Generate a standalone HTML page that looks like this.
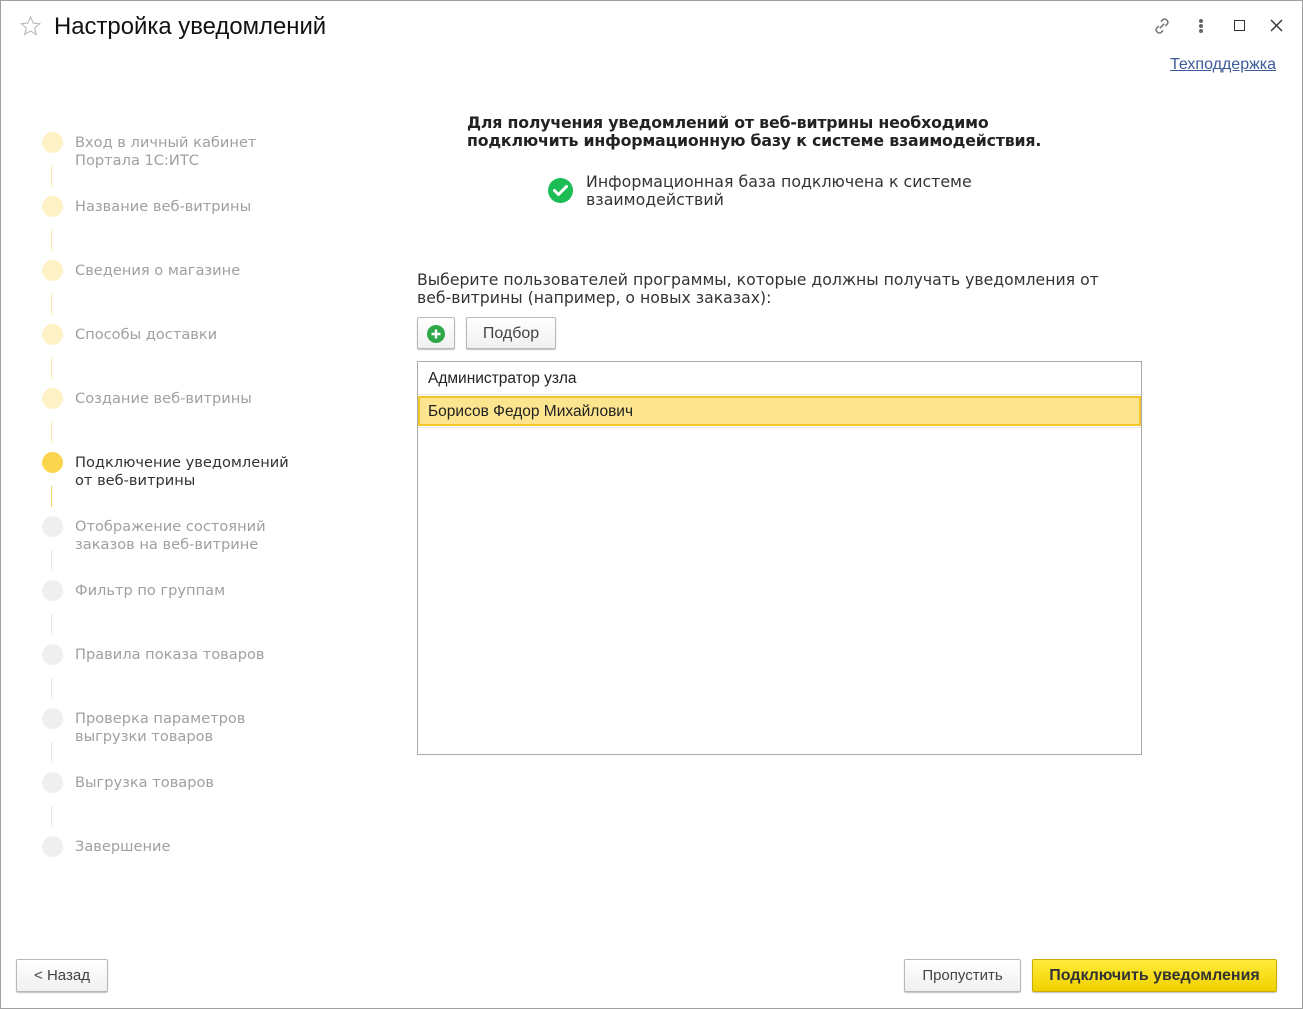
<!DOCTYPE html>
<html><head><meta charset="utf-8"><style>
*{margin:0;padding:0;box-sizing:border-box}
body{width:1303px;height:1009px;background:#fff;position:relative;overflow:hidden;font-family:"Liberation Sans",Arial,sans-serif}
.frame{position:absolute;left:0;top:0;width:1303px;height:1009px;border:1px solid #a0a0a0}
.a{position:absolute}
.st{position:absolute;left:75px;font-family:"DejaVu Sans",sans-serif;font-size:14.6px;line-height:18px;color:#a0a0a0;white-space:nowrap}
.c{position:absolute;left:42px;width:21px;height:21px;border-radius:50%}
.ln{position:absolute;left:51px;width:1px;height:21px}
.btn{position:absolute;border:1px solid #b8b8b8;border-radius:2px;background:linear-gradient(#fff,#f0f0f0);box-shadow:0 1px 1px rgba(0,0,0,.25);font-size:15px;color:#444;text-align:center}
</style></head><body>
<div class="frame"></div>
<svg class="a" style="left:19px;top:15px" width="23" height="22" viewBox="0 0 24 24"><path d="M12 2l2.9 6.9 7.1.6-5.4 4.7 1.7 7.1L12 17.5 5.7 21.3l1.7-7.1L2 9.5l7.1-.6z" fill="none" stroke="#b8b8b8" stroke-width="1.2"/></svg>
<div class="a" style="left:54px;top:13px;font-size:23.9px;color:#111">Настройка уведомлений</div>
<svg class="a" style="left:1151px;top:15px" width="22" height="22" viewBox="0 0 20 20" fill="none" stroke="#777" stroke-width="1.4"><path d="M8 12l4-4"/><path d="M9 6l2-2a3 3 0 014 4l-2 2"/><path d="M11 14l-2 2a3 3 0 01-4-4l2-2"/></svg>
<div class="a" style="left:1199px;top:19px;width:4px;height:4px;border-radius:2px;background:#666;box-shadow:0 5px 0 #666,0 10px 0 #666"></div>
<div class="a" style="left:1234px;top:20px;width:11px;height:11px;border:1.5px solid #333"></div>
<svg class="a" style="left:1270px;top:19px" width="13" height="13" viewBox="0 0 13 13" stroke="#333" stroke-width="1.4"><path d="M1 1l11 11M12 1L1 12"/></svg>
<div class="a" style="left:1170px;top:56px;font-size:16px;color:#3d5a9b;text-decoration:underline">Техподдержка</div>

<div class="c" style="top:132px;background:#fdf1c6"></div><div class="st" style="top:134px">Вход в личный кабинет<br>Портала 1С:ИТС</div>
<div class="ln" style="top:166px;background:#fbe9b0"></div>
<div class="c" style="top:196px;background:#fdf1c6"></div><div class="st" style="top:198px">Название веб-витрины</div>
<div class="ln" style="top:230px;background:#fbe9b0"></div>
<div class="c" style="top:260px;background:#fdf1c6"></div><div class="st" style="top:262px">Сведения о магазине</div>
<div class="ln" style="top:294px;background:#fbe9b0"></div>
<div class="c" style="top:324px;background:#fdf1c6"></div><div class="st" style="top:326px">Способы доставки</div>
<div class="ln" style="top:358px;background:#fbe9b0"></div>
<div class="c" style="top:388px;background:#fdf1c6"></div><div class="st" style="top:390px">Создание веб-витрины</div>
<div class="ln" style="top:422px;background:#fbe9b0"></div>
<div class="c" style="top:452px;background:#fad54e"></div><div class="st" style="top:454px;color:#333">Подключение уведомлений<br>от веб-витрины</div>
<div class="ln" style="top:486px;background:#f5d45a"></div>
<div class="c" style="top:516px;background:#efefef"></div><div class="st" style="top:518px">Отображение состояний<br>заказов на веб-витрине</div>
<div class="ln" style="top:550px;background:#e6e6e6"></div>
<div class="c" style="top:580px;background:#efefef"></div><div class="st" style="top:582px">Фильтр по группам</div>
<div class="ln" style="top:614px;background:#e6e6e6"></div>
<div class="c" style="top:644px;background:#efefef"></div><div class="st" style="top:646px">Правила показа товаров</div>
<div class="ln" style="top:678px;background:#e6e6e6"></div>
<div class="c" style="top:708px;background:#efefef"></div><div class="st" style="top:710px">Проверка параметров<br>выгрузки товаров</div>
<div class="ln" style="top:742px;background:#e6e6e6"></div>
<div class="c" style="top:772px;background:#efefef"></div><div class="st" style="top:774px">Выгрузка товаров</div>
<div class="ln" style="top:806px;background:#e6e6e6"></div>
<div class="c" style="top:836px;background:#efefef"></div><div class="st" style="top:838px">Завершение</div>

<div class="a" style="left:467px;top:114px;font-family:'DejaVu Sans',sans-serif;font-weight:bold;font-size:15.8px;line-height:18px;color:#222;white-space:nowrap;letter-spacing:-0.2px">Для получения уведомлений от веб-витрины необходимо<br>подключить информационную базу к системе взаимодействия.</div>
<svg class="a" style="left:548px;top:178px" width="25" height="25" viewBox="0 0 25 25"><circle cx="12.5" cy="12.5" r="12.5" fill="#1bbd54"/><path d="M6.5 12.5l4 4 8-8" fill="none" stroke="#fff" stroke-width="3" stroke-linecap="round" stroke-linejoin="round"/></svg>
<div class="a" style="left:586px;top:173px;font-family:'DejaVu Sans',sans-serif;font-size:15.8px;line-height:18px;color:#333;white-space:nowrap">Информационная база подключена к системе<br>взаимодействий</div>
<div class="a" style="left:417px;top:271px;font-family:'DejaVu Sans',sans-serif;font-size:15.7px;line-height:18px;color:#333;white-space:nowrap">Выберите пользователей программы, которые должны получать уведомления от<br>веб-витрины (например, о новых заказах):</div>
<div class="btn" style="left:417px;top:317px;width:38px;height:32px"><svg style="margin-top:7px" width="18" height="18" viewBox="0 0 18 18"><circle cx="9" cy="9" r="9" fill="#2fa84a"/><path d="M9 4.5v9M4.5 9h9" stroke="#fff" stroke-width="2.4"/></svg></div>
<div class="btn" style="left:466px;top:317px;width:90px;height:32px;line-height:31px;font-size:16px">Подбор</div>
<div class="a" style="left:417px;top:361px;width:725px;height:394px;border:1px solid #aaa"></div>
<div class="a" style="left:418px;top:394px;width:723px;height:1px;background:#e6e6e6"></div>
<div class="a" style="left:428px;top:370px;font-size:15.5px;color:#222">Администратор узла</div>
<div class="a" style="left:418px;top:396px;width:723px;height:30px;background:#fde48e;border:2px solid #f4c62b"></div>
<div class="a" style="left:428px;top:403px;font-size:15.5px;color:#222">Борисов Федор Михайлович</div>
<div class="a" style="left:418px;top:427px;width:723px;height:1px;background:#e6e6e6"></div>

<div class="btn" style="left:16px;top:959px;width:92px;height:33px;line-height:32px">&lt; Назад</div>
<div class="btn" style="left:904px;top:959px;width:117px;height:33px;line-height:32px">Пропустить</div>
<div class="btn" style="left:1032px;top:959px;width:245px;height:33px;line-height:32px;background:linear-gradient(#ffec3a,#f0d000);border-color:#c8ae00;font-weight:bold;color:#333;font-size:16px">Подключить уведомления</div>
</body></html>
